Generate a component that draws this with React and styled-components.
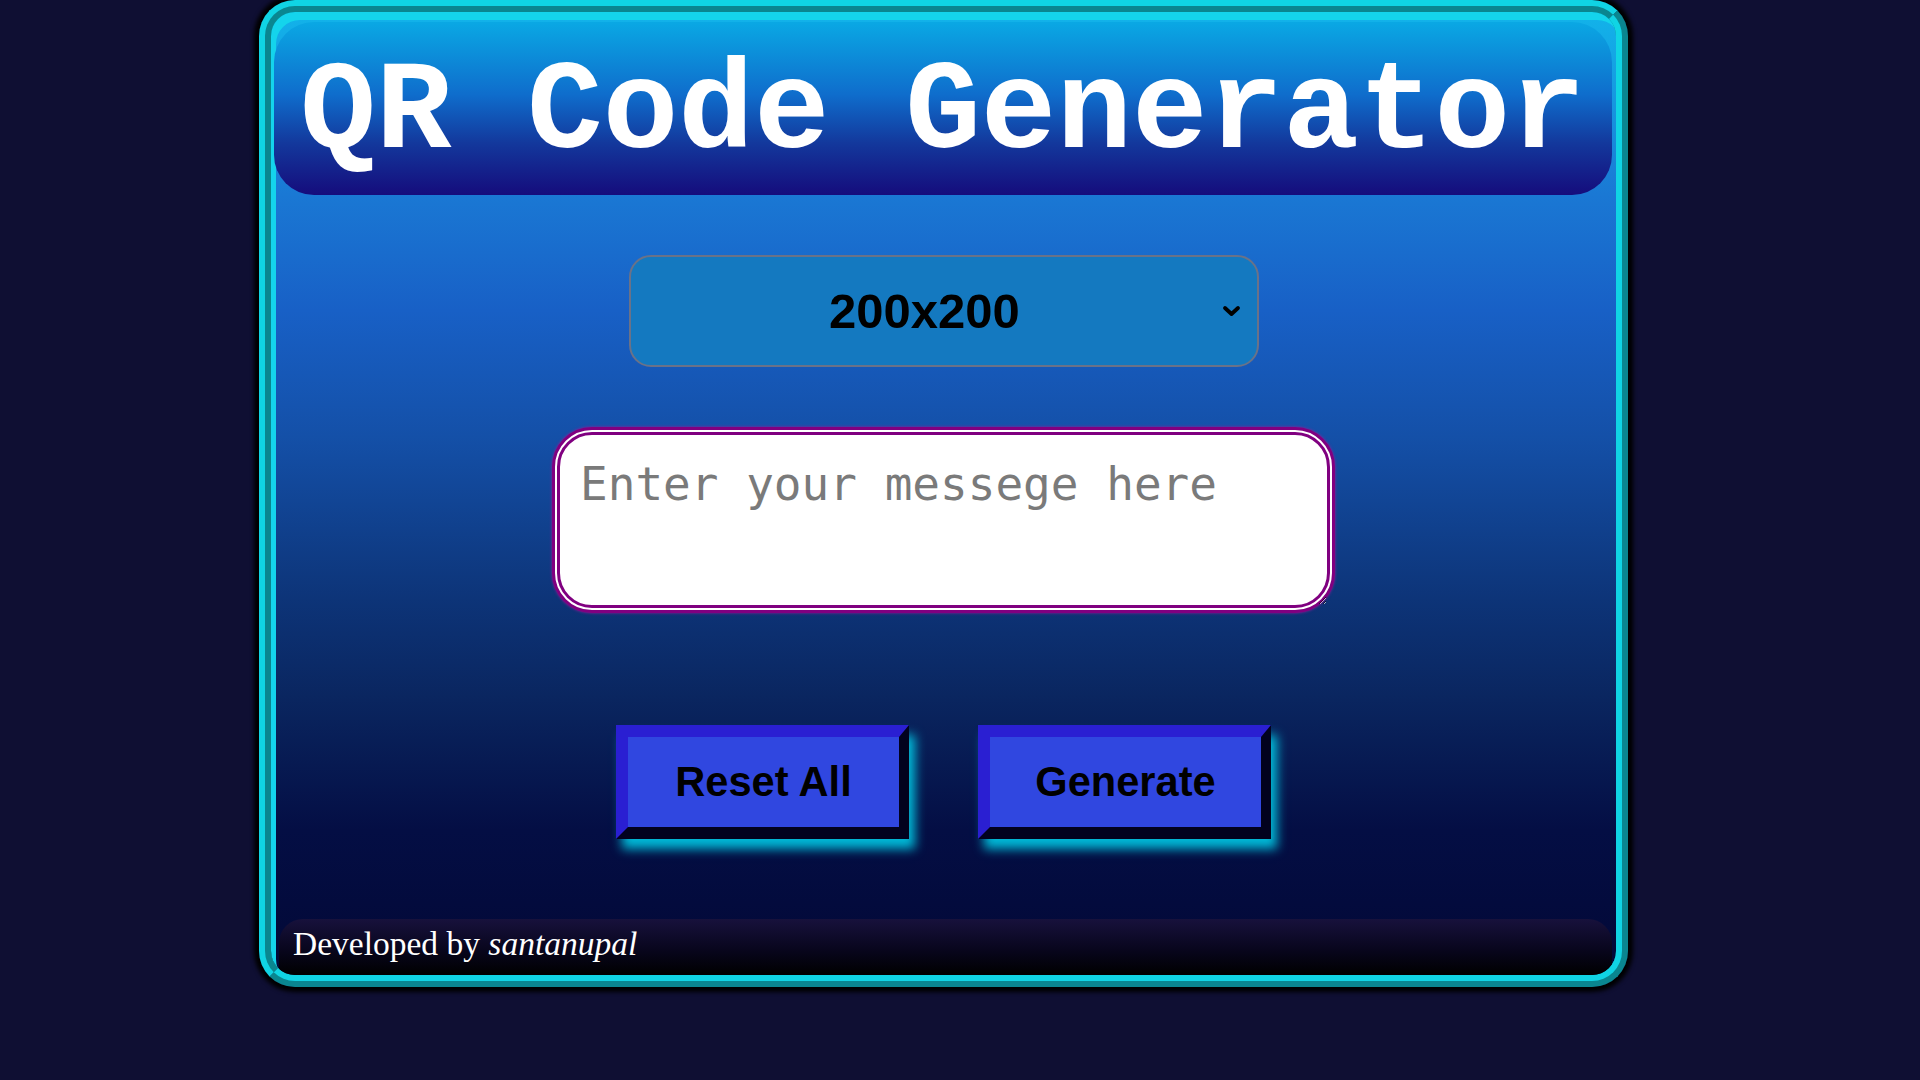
import React from "react";
import styled, { createGlobalStyle } from "styled-components";

const GlobalStyle = createGlobalStyle`
  html, body {
    margin: 0;
    padding: 0;
    background: #0f0f33;
  }
  * { box-sizing: border-box; }
`;

const Page = styled.div`
  min-height: 100vh;
  background: #0f0f33;
  padding-left: 259px;
  display: flex;
  align-items: flex-start;
`;

const Card = styled.main`
  width: 1369px;
  height: 987px;
  border: 12px ridge #10d4e4;
  border-radius: 36px;
  background: linear-gradient(
    180deg,
    #12b4ea 0%,
    #1a78d4 19%,
    #1860c6 31%,
    #1450a8 44%,
    #0d3478 61%,
    #0a2660 71%,
    #040e44 85%,
    #020836 100%
  );
  box-shadow: inset 5px 8px 0 #14d4ec, 0 0 4px 5px #000;
  display: flex;
  flex-direction: column;
  align-items: center;
  overflow: hidden;
`;

const Header = styled.header`
  align-self: stretch;
  margin: 10px 4px 0 3px;
  height: 173px;
  padding-top: 10px;
  border-radius: 40px;
  background: linear-gradient(180deg, #0aa8e4 0%, #0f6dcc 42%, #13389c 70%, #150c7c 100%);
  display: flex;
  align-items: center;
  justify-content: center;
`;

const Title = styled.h1`
  margin: 0;
  font-family: "Liberation Mono", "Courier New", monospace;
  font-weight: 700;
  font-size: 126px;
  line-height: 1;
  color: #ffffff;
  white-space: nowrap;
`;

const SelectWrap = styled.div`
  position: relative;
  margin-top: 60px;
  width: 630px;
  height: 112px;
`;

const SizeSelect = styled.select`
  appearance: none;
  -webkit-appearance: none;
  width: 100%;
  height: 100%;
  border: 2px solid #6a7288;
  border-radius: 22px;
  background: #1479c0;
  color: #000;
  font-family: "Liberation Sans", Arial, sans-serif;
  font-weight: 700;
  font-size: 49px;
  text-align: center;
  text-align-last: center;
  padding: 0 38px 0 0;
  outline: none;
`;

const Chevron = styled.svg`
  position: absolute;
  right: 18px;
  top: 50%;
  width: 19px;
  height: 12px;
  transform: translateY(-50%);
  pointer-events: none;
`;

const Message = styled.textarea`
  margin-top: 60px;
  width: 783px;
  height: 186px;
  border: 8px double #800080;
  border-radius: 40px;
  background: #ffffff;
  box-shadow: 0 0 3px #9a1a9a;
  padding: 22px 20px;
  font-family: "DejaVu Sans Mono", "Liberation Mono", monospace;
  font-size: 46px;
  color: #222;
  outline: none;
  &::placeholder {
    color: #7a7a7a;
  }
`;

const ButtonRow = styled.div`
  margin-top: 112px;
  display: flex;
  gap: 69px;
`;

const ActionButton = styled.button`
  width: 293px;
  height: 114px;
  border-style: solid;
  border-width: 12px 10px 12px 12px;
  border-color: #2a1fd2 #02021e #02021e #2a1fd2;
  background: #3047e0;
  color: #000;
  font-family: "Liberation Sans", Arial, sans-serif;
  font-weight: 700;
  font-size: 41.6px;
  box-shadow: 6px 10px 10px rgba(0, 214, 240, 0.85);
  cursor: pointer;
  padding: 0;
`;

const Footer = styled.footer`
  align-self: stretch;
  margin: auto 4px 0 8px;
  height: 56px;
  padding: 0 0 12px 14px;
  border-radius: 24px 24px 0 0;
  background: linear-gradient(180deg, #17113c 0%, #07051a 60%, #000000 100%);
  display: flex;
  align-items: flex-end;
  font-family: "Liberation Serif", "Times New Roman", serif;
  font-size: 33.5px;
  line-height: 1.1;
  color: #ffffff;
  white-space: nowrap;
`;

const Author = styled.em`
  font-style: italic;
`;

export default function App() {
  return (
    <>
      <GlobalStyle />
      <Page>
        <Card>
          <Header>
            <Title>QR Code Generator</Title>
          </Header>
          <SelectWrap>
            <SizeSelect defaultValue="200x200">
              <option value="100x100">100x100</option>
              <option value="150x150">150x150</option>
              <option value="200x200">200x200</option>
              <option value="250x250">250x250</option>
              <option value="300x300">300x300</option>
            </SizeSelect>
            <Chevron viewBox="0 0 19 12" aria-hidden="true">
              <path
                d="M3 3 L9.5 9 L16 3"
                fill="none"
                stroke="#000"
                strokeWidth="3.8"
                strokeLinecap="round"
                strokeLinejoin="round"
              />
            </Chevron>
          </SelectWrap>
          <Message placeholder="Enter your messege here" />
          <ButtonRow>
            <ActionButton type="button">Reset All</ActionButton>
            <ActionButton type="button">Generate</ActionButton>
          </ButtonRow>
          <Footer>
            <span>
              Developed by <Author>santanupal</Author>
            </span>
          </Footer>
        </Card>
      </Page>
    </>
  );
}
